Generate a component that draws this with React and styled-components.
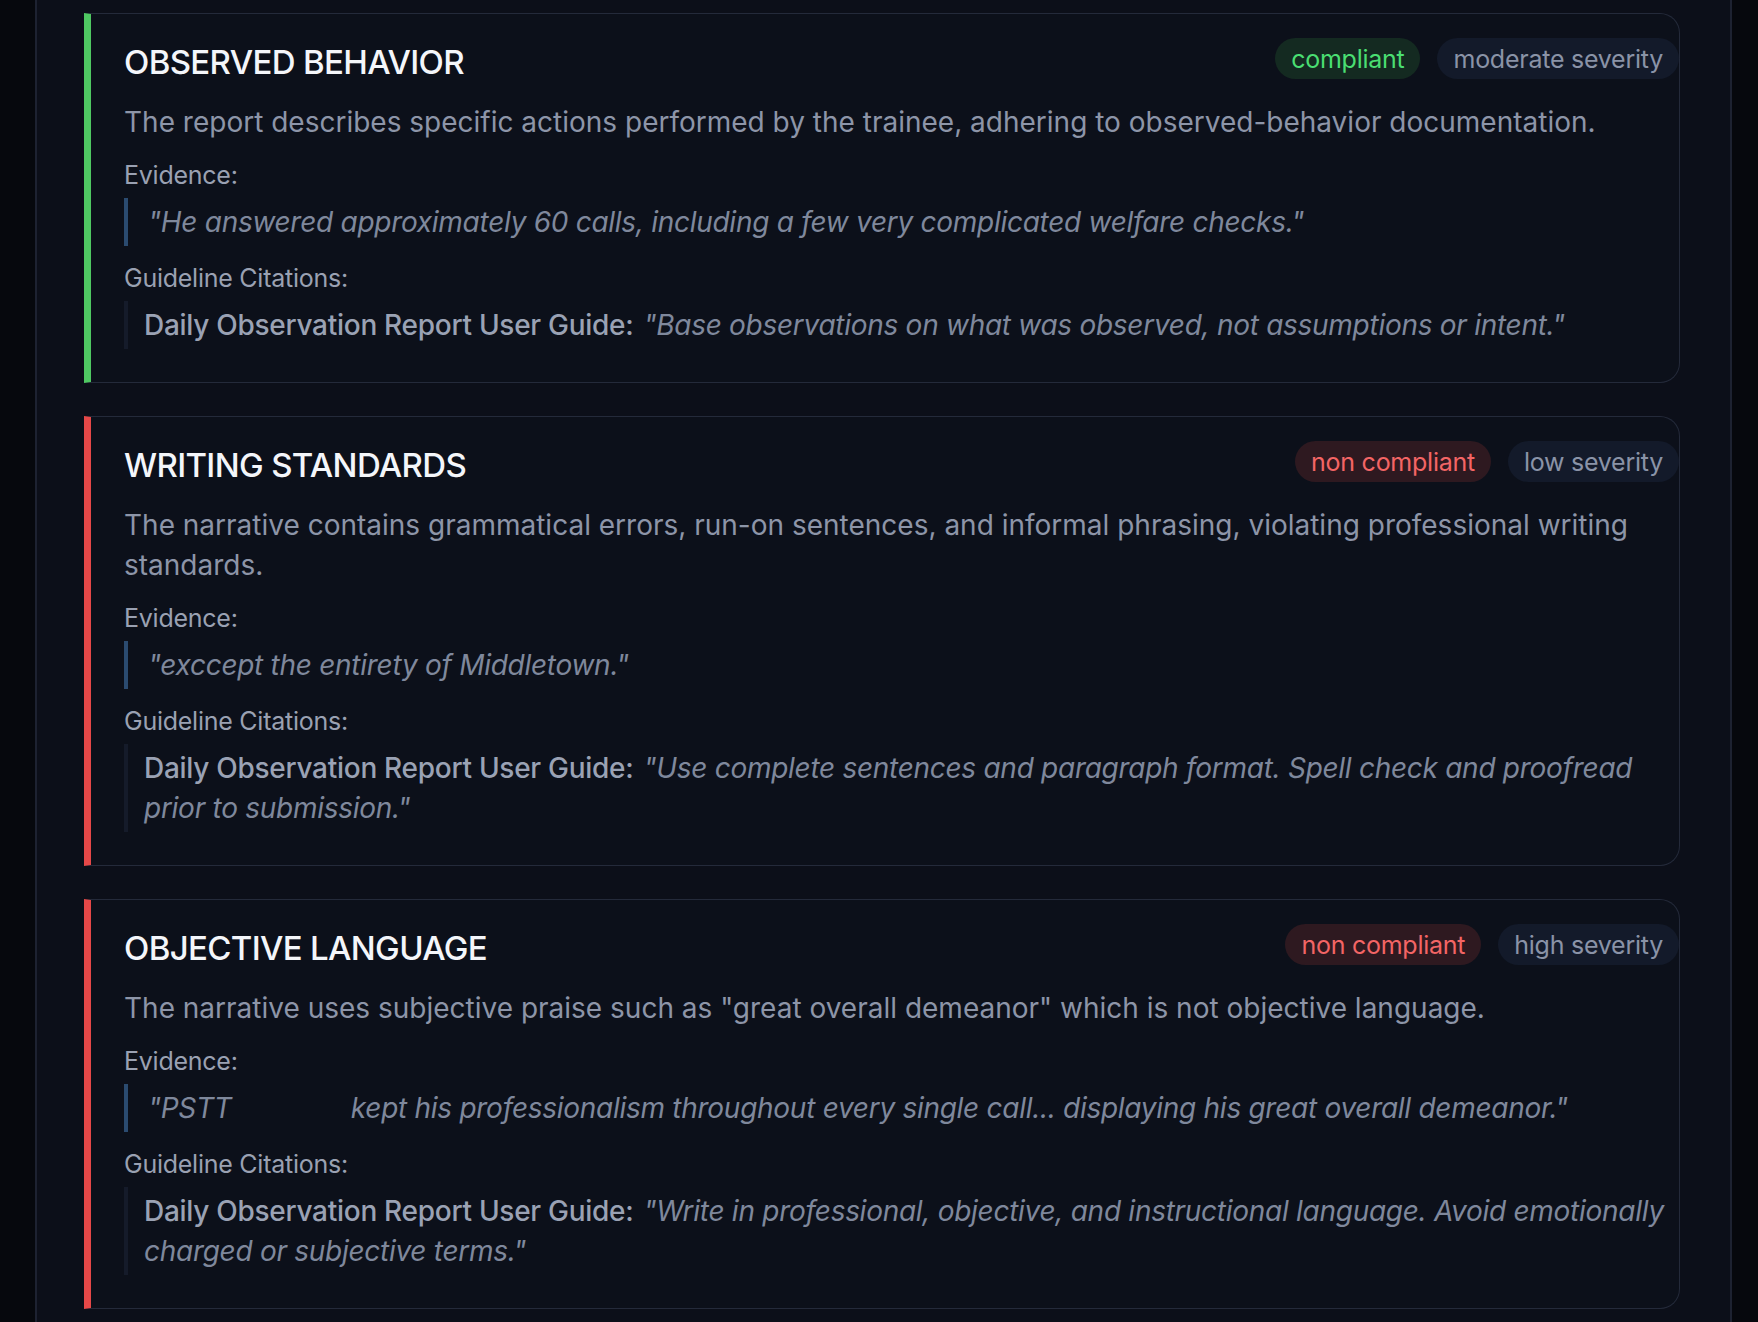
import React from 'react';
import styled, { createGlobalStyle, css } from 'styled-components';

const GlobalStyle = createGlobalStyle`
  html, body {
    margin: 0;
    padding: 0;
    background: #06080d;
  }
  body {
    font-family: Inter, "Noto Sans", "Liberation Sans", sans-serif;
    -webkit-font-smoothing: antialiased;
  }
`;

const tones = {
  green: '#4fc862',
  red: '#e64848',
};

const Page = styled.div`
  min-height: 1322px;
  padding-left: 35px;
  padding-right: 26px;
  display: flex;
`;

const Panel = styled.main`
  flex: 1;
  background: #0c0f19;
  border-left: 2px solid #1d2231;
  border-right: 2px solid #1d2231;
  padding: 13px 50px 0 47px;
  display: flex;
  flex-direction: column;
  gap: 33px;
`;

const Card = styled.section`
  background: #0c101a;
  border: 1px solid #242a3a;
  border-left: 7px solid ${p => tones[p.$tone]};
  border-radius: 0 20px 20px 0;
  padding: 27px 0 33px 33px;
  display: flex;
  flex-direction: column;
`;

const Header = styled.div`
  display: flex;
  align-items: center;
  justify-content: space-between;
  height: 42px;
`;

const Title = styled.h2`
  margin: 0;
  font-size: 33px;
  font-weight: 500;
  letter-spacing: -0.02em;
  color: #f4f6fa;
`;

const Badges = styled.div`
  display: flex;
  gap: 17px;
  align-self: flex-start;
  margin-top: -3px;
`;

const badgeVariants = {
  ok: css`
    background: #142a21;
    color: #4ade72;
  `,
  bad: css`
    background: #2e1920;
    color: #f36565;
  `,
  muted: css`
    background: #131a2a;
    color: #8a93a7;
  `,
};

const Badge = styled.span`
  display: inline-flex;
  align-items: center;
  height: 41px;
  padding: 0 16px;
  border-radius: 21px;
  font-size: 25px;
  letter-spacing: -0.01em;
  ${p => badgeVariants[p.$variant]}
`;

const Summary = styled.p`
  margin: 19px 0 0;
  font-size: 28px;
  line-height: 40px;
  color: #8d95a8;
`;

const Label = styled.div`
  margin-top: ${p => (p.$first ? 17 : 16)}px;
  font-size: 25px;
  line-height: 32px;
  letter-spacing: -0.01em;
  color: #9aa1b2;
`;

const Quote = styled.blockquote`
  margin: 7px 0 0;
  padding: 4px 0 4px ${p => (p.$accent ? 20 : 16)}px;
  border-left: 4px solid ${p => (p.$accent ? '#2b4b70' : '#151b2a')};
  font-size: 28px;
  line-height: 40px;
  letter-spacing: -0.01em;
  color: #7f889c;
`;

const Italic = styled.em`
  font-style: italic;
  color: #7f889c;
`;

const Source = styled.span`
  color: #9aa2b4;
  font-weight: 500;
  margin-right: 10px;
`;

const Redacted = styled.span`
  display: inline-block;
  width: 104px;
`;

const findings = [
  {
    tone: 'green',
    title: 'OBSERVED BEHAVIOR',
    status: { variant: 'ok', text: 'compliant' },
    severity: 'moderate severity',
    summary:
      'The report describes specific actions performed by the trainee, adhering to observed-behavior documentation.',
    evidence: '"He answered approximately 60 calls, including a few very complicated welfare checks."',
    citation: '"Base observations on what was observed, not assumptions or intent."',
  },
  {
    tone: 'red',
    title: 'WRITING STANDARDS',
    status: { variant: 'bad', text: 'non compliant' },
    severity: 'low severity',
    summary:
      'The narrative contains grammatical errors, run-on sentences, and informal phrasing, violating professional writing standards.',
    evidence: '"exccept the entirety of Middletown."',
    citation: '"Use complete sentences and paragraph format. Spell check and proofread prior to submission."',
  },
  {
    tone: 'red',
    title: 'OBJECTIVE LANGUAGE',
    status: { variant: 'bad', text: 'non compliant' },
    severity: 'high severity',
    summary:
      'The narrative uses subjective praise such as "great overall demeanor" which is not objective language.',
    evidence: (
      <>
        "PSTT <Redacted /> kept his professionalism throughout every single call... displaying his great overall demeanor."
      </>
    ),
    citation:
      '"Write in professional, objective, and instructional language. Avoid emotionally charged or subjective terms."',
  },
];

const Finding = ({ item }) => (
  <Card $tone={item.tone}>
    <Header>
      <Title>{item.title}</Title>
      <Badges>
        <Badge $variant={item.status.variant}>{item.status.text}</Badge>
        <Badge $variant="muted">{item.severity}</Badge>
      </Badges>
    </Header>
    <Summary>{item.summary}</Summary>
    <Label $first>Evidence:</Label>
    <Quote $accent>
      <Italic>{item.evidence}</Italic>
    </Quote>
    <Label>Guideline Citations:</Label>
    <Quote>
      <Source>Daily Observation Report User Guide:</Source>
      <Italic>{item.citation}</Italic>
    </Quote>
  </Card>
);

export default function App() {
  return (
    <>
      <GlobalStyle />
      <Page>
        <Panel>
          {findings.map(f => (
            <Finding key={f.title} item={f} />
          ))}
        </Panel>
      </Page>
    </>
  );
}
